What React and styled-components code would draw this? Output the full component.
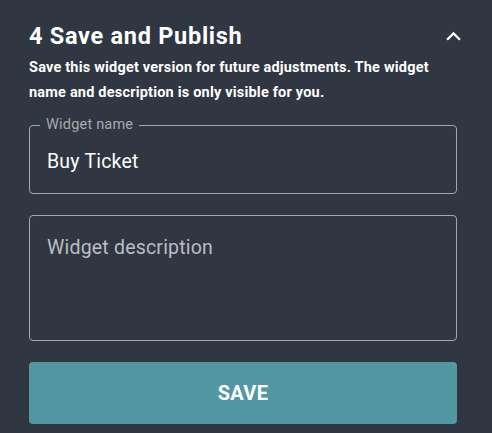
import React from "react";
import styled, { createGlobalStyle } from "styled-components";

const Global = createGlobalStyle`
  html, body { margin: 0; padding: 0; background: #303642; }
  body { font-family: Roboto, "Liberation Sans", Arial, sans-serif; }
  * { box-sizing: border-box; }
`;

const Panel = styled.section`
  width: 492px;
  min-height: 433px;
  background: #303642;
  padding: 22px 35px 0 29px;
  display: flex;
  flex-direction: column;
`;

const HeaderRow = styled.div`
  display: flex;
  align-items: center;
  justify-content: space-between;
  height: 28px;
`;

const Title = styled.h2`
  margin: 0;
  font-size: 23.5px;
  line-height: 28px;
  font-weight: 700;
  letter-spacing: 0.72px;
  color: #ffffff;
`;

const Toggle = styled.button`
  background: none;
  border: 0;
  padding: 0;
  margin-right: -11px;
  width: 29px;
  height: 29px;
  display: flex;
  align-items: center;
  justify-content: center;
  color: #ffffff;
  cursor: pointer;
`;

const Description = styled.p`
  margin: 5px 0 0;
  font-size: 14.5px;
  line-height: 25px;
  font-weight: 700;
  letter-spacing: 0.2px;
  color: #ffffff;
`;

const Form = styled.div`
  display: flex;
  flex-direction: column;
  gap: 21px;
  margin-top: 20px;
`;

const Field = styled.div`
  position: relative;
  height: ${(p) => p.$h}px;
`;

const Outline = styled.fieldset`
  position: absolute;
  inset: -6px 0 0 0;
  margin: 0;
  padding: 0 10px;
  border: 1px solid #a3a7ae;
  border-radius: 4px;
  pointer-events: none;
`;

const Legend = styled.legend`
  padding: 0 6px;
  font-size: 14.5px;
  line-height: 12px;
  letter-spacing: 0.2px;
  color: #a6aab1;
  font-weight: 400;
`;

const Input = styled.input`
  width: 100%;
  height: 100%;
  background: transparent;
  border: 0;
  outline: none;
  padding: 4px 18px 0;
  font-family: inherit;
  font-size: 19.5px;
  letter-spacing: 0.2px;
  color: #ffffff;
`;

const TextArea = styled.textarea`
  width: 100%;
  height: 100%;
  background: transparent;
  border: 1px solid #a3a7ae;
  border-radius: 4px;
  outline: none;
  resize: none;
  padding: 20px 17px;
  font-family: inherit;
  font-size: 19.5px;
  letter-spacing: 0.2px;
  line-height: 24px;
  color: #ffffff;
  &::placeholder { color: #b9bdc4; opacity: 1; }
`;

const SaveButton = styled.button`
  height: 62px;
  border: 0;
  border-radius: 4px;
  background: #5397a3;
  color: #ffffff;
  font-family: inherit;
  font-size: 20px;
  font-weight: 700;
  letter-spacing: 0.3px;
  cursor: pointer;
`;

export default function App() {
  return (
    <>
      <Global />
      <Panel>
        <HeaderRow>
          <Title>4 Save and Publish</Title>
          <Toggle aria-label="collapse">
            <svg width="29" height="29" viewBox="0 0 24 24" fill="currentColor">
              <path d="M12 8l-6 6 1.41 1.41L12 10.83l4.59 4.58L18 14z" />
            </svg>
          </Toggle>
        </HeaderRow>
        <Description>
          Save this widget version for future adjustments. The widget name and description is only visible for you.
        </Description>
        <Form>
          <Field $h={69}>
            <Input defaultValue="Buy Ticket" />
            <Outline>
              <Legend>Widget name</Legend>
            </Outline>
          </Field>
          <Field $h={126}>
            <TextArea placeholder="Widget description" />
          </Field>
          <SaveButton>SAVE</SaveButton>
        </Form>
      </Panel>
    </>
  );
}
